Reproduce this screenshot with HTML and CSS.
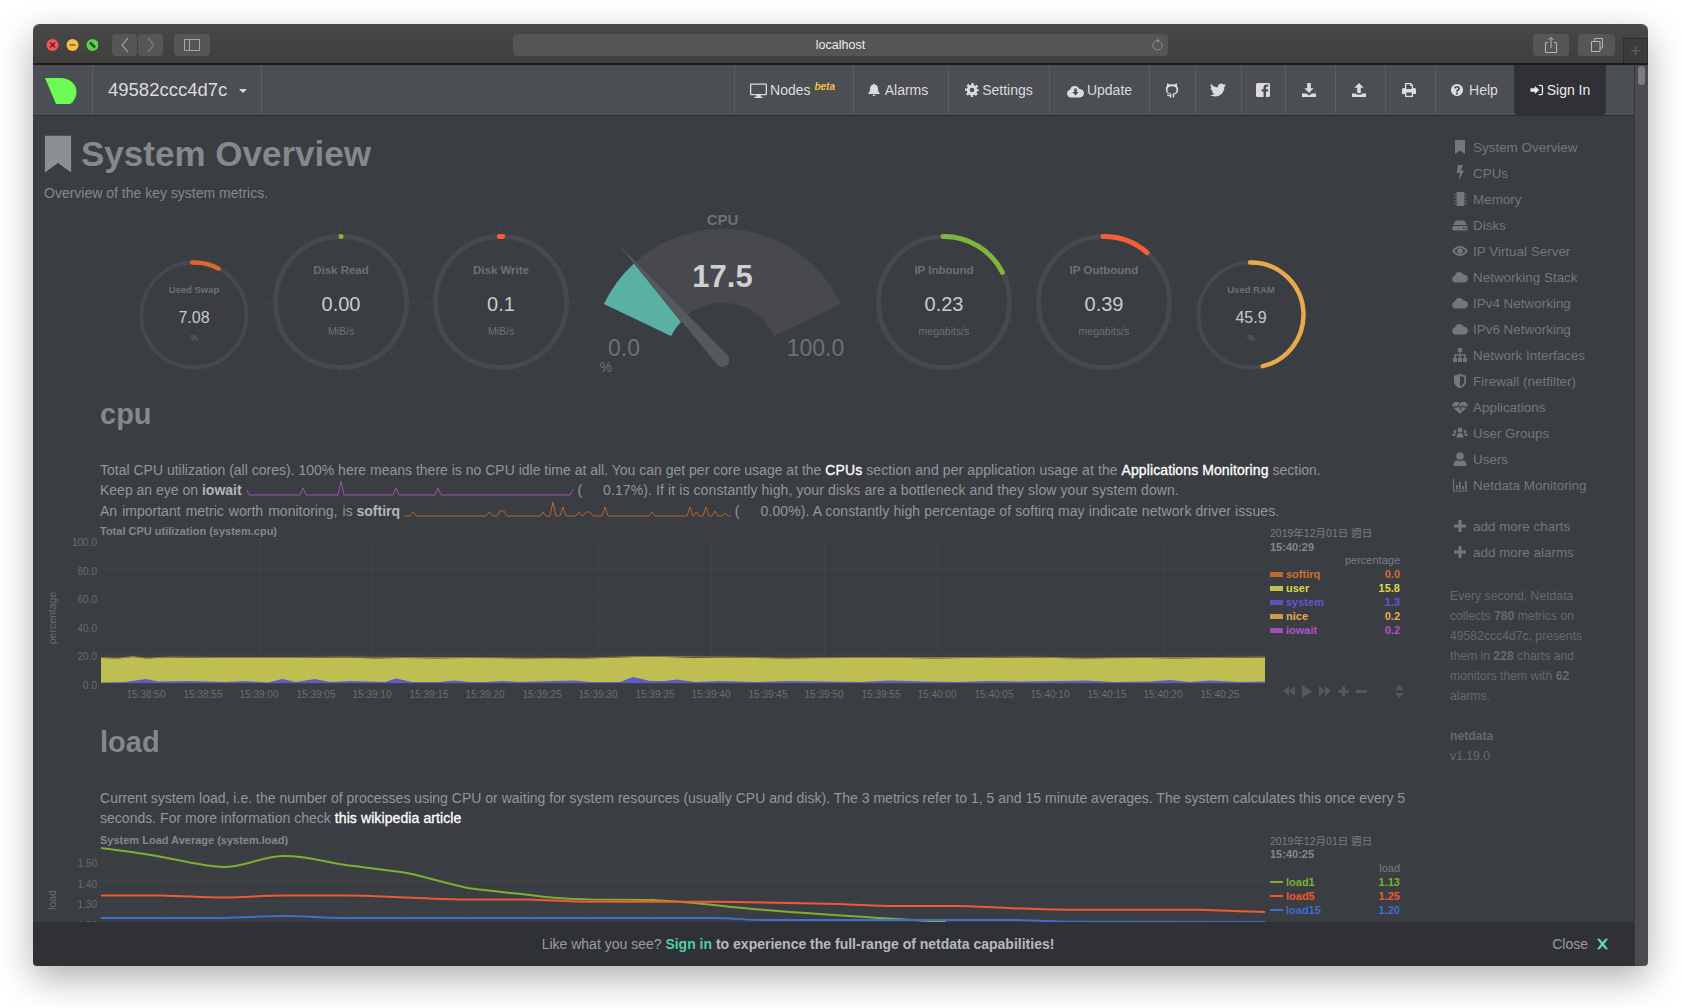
FILE: index.html
```html
<!DOCTYPE html>
<html lang="en">
<head>
  <meta charset="UTF-8">
  <meta name="viewport" content="width=device-width, initial-scale=1.0">
  <title>netdata dashboard</title>
  <link rel="stylesheet" href="styles.css">
</head>
<body>
  <svg class="sprite" aria-hidden="true">
    <symbol id="i-bookmark" viewBox="0 0 16 16"><path d="M3 1h10v14l-5-3.6L3 15z"/></symbol>
    <symbol id="i-bolt" viewBox="0 0 16 16"><path d="M6 0h5L9 5.5h3L6.5 16l1.6-8H4.6z"/></symbol>
    <symbol id="i-memory" viewBox="0 0 16 16"><path d="M5.5 1h6a1 1 0 0 1 1 1v12a1 1 0 0 1-1 1h-6a1 1 0 0 1-1-1V2a1 1 0 0 1 1-1zM2.5 3h1v1.5h-1zM2.5 6h1v1.5h-1zM2.5 9h1v1.5h-1zM2.5 12h1v1.5h-1zM13.5 3h1v1.5h-1zM13.5 6h1v1.5h-1zM13.5 9h1v1.5h-1zM13.5 12h1v1.5h-1z"/></symbol>
    <symbol id="i-hdd" viewBox="0 0 16 16"><path fill-rule="evenodd" d="M3.8 3.5h8.4L15 8H1zM1.5 9h13a1 1 0 0 1 1 1v2.5a1 1 0 0 1-1 1h-13a1 1 0 0 1-1-1V10a1 1 0 0 1 1-1zM11 10.5V12h1.3v-1.5zM13 10.5V12h1.3v-1.5z"/></symbol>
    <symbol id="i-eye" viewBox="0 0 16 16"><path fill-rule="evenodd" d="M8 3c3.6 0 6.4 2.4 7.8 5-1.4 2.6-4.2 5-7.8 5S1.6 10.6.2 8C1.6 5.4 4.4 3 8 3zM8 4.8c-2.3 0-4.3 1.4-5.7 3.2C3.7 9.8 5.7 11.2 8 11.2s4.3-1.4 5.7-3.2C12.3 6.2 10.3 4.8 8 4.8zM8 5.2a2.8 2.8 0 1 1 0 5.6 2.8 2.8 0 0 1 0-5.6z"/></symbol>
    <symbol id="i-cloud" viewBox="0 0 16 16"><path d="M3.7 13.5A3.5 3.5 0 0 1 2.9 6.6 4.6 4.6 0 0 1 11.6 5.7 3.9 3.9 0 0 1 12.2 13.5z"/></symbol>
    <symbol id="i-sitemap" viewBox="0 0 16 16"><path d="M5.8 1h4.4v4H8.6v2.2h5.2V11H15v4h-4v-4h1.3V8.7H8.7V11H10v4H6v-4h1.3V8.7H3.7V11H5v4H1v-4h1.2V7.2h5.2V5H5.8z"/></symbol>
    <symbol id="i-shield" viewBox="0 0 16 16"><path fill-rule="evenodd" d="M8 .8l6 2v5.4c0 3.6-3 6-6 7-3-1-6-3.4-6-7V2.8zM8 2.8v10.6c2.2-.9 4.2-2.8 4.2-5.2V4.1z"/></symbol>
    <symbol id="i-heartbeat" viewBox="0 0 16 16"><path d="M.4 7.2C-.2 3.5 4.8.9 8 4.4c3.2-3.5 8.2-.9 7.6 2.8H11.3l-1-1.8-1.7 3.7-1.8-4.2-1.4 2.3zM1.3 8.5h4.6l.8-1.3 1.9 4.3 1.8-4 .5 1h3.8L8 15z"/></symbol>
    <symbol id="i-users" viewBox="0 0 16 16"><circle cx="8" cy="5" r="2.4"/><circle cx="2.9" cy="6.4" r="1.5"/><circle cx="13.1" cy="6.4" r="1.5"/><path d="M4.5 12.5c0-3 1.5-4.4 3.5-4.4s3.5 1.4 3.5 4.4zM.2 11c0-1.8 1-2.7 2.7-2.7.5 0 .8.1 1.1.2-.6.7-.8 1.5-.9 2.5zM15.8 11c0-1.8-1-2.7-2.7-2.7-.5 0-.8.1-1.1.2.6.7.8 1.5.9 2.5z"/></symbol>
    <symbol id="i-user" viewBox="0 0 16 16"><circle cx="8" cy="5" r="3.8"/><path d="M1.5 15v-1.5C1.5 10.8 3.5 9.5 5.2 9.2c1.7.9 3.9.9 5.6 0 1.7.3 3.7 1.6 3.7 4.3V15z"/></symbol>
    <symbol id="i-chart" viewBox="0 0 16 16"><path d="M1 2h1v11.5h14v1H1zM4 8h1.7v4.5H4zM7 5h1.7v7.5H7zM10 9h1.7v3.5H10zM13 4h1.7v8.5H13z"/></symbol>
    <symbol id="i-plus" viewBox="0 0 16 16"><path d="M6.5 2h3v4.500H14v3H9.500V14h-3V9.500H2v-3h4.500z"/></symbol>
    <symbol id="i-times" viewBox="0 0 16 16"><path d="M4.5 1.500L8 5.500l3.500-4H15L10 8l5 6.500h-3.500L8 10.500l-3.500 4H1L6 8 1 1.500z"/></symbol>
    <symbol id="i-desktop" viewBox="0 0 16 16"><path fill-rule="evenodd" d="M1 1.5h14a1 1 0 0 1 1 1v9a1 1 0 0 1-1 1h-5v1.3h1.8V15H4.2v-1.2H6v-1.3H1a1 1 0 0 1-1-1v-9a1 1 0 0 1 1-1zM1.2 2.7v8.600h13.600V2.700z"/></symbol>
    <symbol id="i-bell" viewBox="0 0 16 16"><path d="M8 .8c.6 0 1 .4 1 1 2.2.4 3.5 2.2 3.5 4.5 0 3.8 1.5 5 2.5 6.2H1c1-1.2 2.5-2.4 2.5-6.2C3.5 4 4.8 2.2 7 1.800c0-.6.4-1 1-1zM6.300 13.500h3.400a1.700 1.700 0 0 1-3.400 0z"/></symbol>
    <symbol id="i-gear" viewBox="0 0 16 16"><circle cx="8" cy="8" r="4.3" fill="none" stroke="currentColor" stroke-width="3.4"/><circle cx="8" cy="8" r="6.8" fill="none" stroke="currentColor" stroke-width="2.4" pathLength="40" stroke-dasharray="2.6 2.4" stroke-dashoffset="1.3"/></symbol>
    <symbol id="i-cloud-down" viewBox="0 0 16 16"><path fill-rule="evenodd" d="M3.7 14.5A3.6 3.6 0 0 1 2.9 7.4 4.7 4.7 0 0 1 11.7 6.5 4 4 0 0 1 12.2 14.5zM6.8 6v3.5H5l3 3.3 3-3.3H9.2V6z"/></symbol>
    <symbol id="i-github" viewBox="0 0 16 16"><path fill-rule="evenodd" d="M3.1 1.5c.9 0 1.9.5 2.7 1.1A8 8 0 0 1 8 2.300c.8 0 1.500.1 2.200.3.800-.6 1.800-1.100 2.700-1.100.3.800.3 1.800.1 2.700.7.900 1.200 2 1.200 3.300 0 2.900-1.600 4.500-4 5.100v2.900H8.700v-3.800c1.900-.1 3.800-1 3.800-4.200 0-2.300-2-3.300-4.500-3.300S3.500 5.200 3.500 7.500c0 3.200 1.900 4.100 3.800 4.200v3.800H5.800v-1.300c-1.600.3-2.500-.3-3.100-1.600l1.100-.3c.4.700 1 .9 2 .7v-.8c-2.400-.6-4-2.200-4-5.100 0-1.300.5-2.400 1.200-3.300-.2-.9-.2-1.900.1-2.700z"/></symbol>
    <symbol id="i-twitter" viewBox="0 0 24 24"><path d="M23.950 4.570a10 10 0 0 1-2.820.77 4.960 4.960 0 0 0 2.160-2.720c-.95.55-2 .96-3.120 1.190a4.920 4.920 0 0 0-8.380 4.480C7.690 8.100 4.070 6.130 1.640 3.160a4.820 4.820 0 0 0-.67 2.480c0 1.710.87 3.210 2.190 4.100a4.900 4.900 0 0 1-2.230-.62v.06a4.920 4.920 0 0 0 3.950 4.830 5 5 0 0 1-2.210.08 4.940 4.940 0 0 0 4.600 3.420A9.870 9.870 0 0 1 0 19.540a14 14 0 0 0 7.560 2.210c9.050 0 14-7.500 14-13.980 0-.21 0-.42-.02-.63a9.940 9.940 0 0 0 2.460-2.550z"/></symbol>
    <symbol id="i-facebook" viewBox="0 0 16 16"><path d="M2.5 1h11A1.5 1.5 0 0 1 15 2.5v11a1.5 1.5 0 0 1-1.5 1.5H11V9.5h1.9l.3-2.3H11V5.8c0-.7.2-1.1 1.1-1.1h1.2V2.6h-1.8C9.7 2.6 8.5 3.8 8.5 5.6v1.6h-2v2.3h2V15h-6A1.5 1.5 0 0 1 1 13.5v-11A1.5 1.5 0 0 1 2.5 1z"/></symbol>
    <symbol id="i-download" viewBox="0 0 16 16"><path d="M6.2 1h3.6v5.2h2.900L8 11 3.300 6.200h2.900zM1 11.500h4.300L8 13.500l2.700-2H15V15H1z"/></symbol>
    <symbol id="i-upload" viewBox="0 0 16 16"><path d="M8 1l4.7 4.8H9.800V11H6.200V5.800H3.300zM1 11.500h4v1h6v-1h4V15H1z"/></symbol>
    <symbol id="i-print" viewBox="0 0 16 16"><path fill-rule="evenodd" d="M4 1h6l2 2v3h1.5A1.5 1.5 0 0 1 15 7.5V12h-3v3H4v-3H1V7.5A1.5 1.5 0 0 1 2.500 6H4zM5.300 2.300V7h5.400V3.800H9V2.300zM5.300 10.500v3.200h5.400v-3.200z"/></symbol>
    <symbol id="i-help" viewBox="0 0 16 16"><path fill-rule="evenodd" d="M8 1a7 7 0 1 1 0 14A7 7 0 0 1 8 1zM6.900 11v2h2.200v-2zM8 3.300c-1.900 0-3.200 1-3.400 2.700l2 .3c.1-.7.6-1.100 1.300-1.100s1.200.4 1.200 1c0 .5-.3.8-1 1.300-.8.6-1.200 1.200-1.200 2.100v.4h2.200v-.3c0-.4.2-.6.8-1.100 1-.7 1.400-1.400 1.400-2.400 0-1.800-1.200-2.900-3.300-2.900z"/></symbol>
    <symbol id="i-signin" viewBox="0 0 16 16"><path d="M5.5 3.500L10.500 8l-5 4.500V10H.5V6h5zM10 2h2.500A2.500 2.500 0 0 1 15 4.500v7a2.500 2.500 0 0 1-2.500 2.500H10v-1.500h2.500a1 1 0 0 0 1-1v-7a1 1 0 0 0-1-1H10z"/></symbol>
  </svg>

  <div class="window">
    <div class="titlebar">
      <svg class="lights" width="52" height="14" viewBox="0 0 52 14">
        <circle cx="6.5" cy="7" r="6" fill="#f1565a"/>
        <path d="M4 4.500l5 5M9 4.500l-5 5" stroke="#7c1518" stroke-width="1.5"/>
        <circle cx="26.5" cy="7" r="6" fill="#f6bd4b"/>
        <path d="M23.500 7h6" stroke="#8c5c0a" stroke-width="1.5"/>
        <circle cx="46.5" cy="7" r="6" fill="#5fcf54"/>
        <path d="M44 4.500l5 5" stroke="#14600f" stroke-width="2.5"/>
      </svg>
      <div class="tool-group">
        <span class="tool tool-nav"><svg width="10" height="16" viewBox="0 0 10 16"><path d="M8 1L2 8l6 7" fill="none" stroke="#9c9c9c" stroke-width="1.2"/></svg></span>
        <span class="tool tool-nav"><svg width="10" height="16" viewBox="0 0 10 16"><path d="M2 1l6 7-6 7" fill="none" stroke="#7d7d7d" stroke-width="1.2"/></svg></span>
      </div>
      <span class="tool tool-side"><svg width="16" height="12" viewBox="0 0 16 12"><path d="M.5.500h15v11H.5zM5.500.500v11" fill="none" stroke="#a5a5a5"/></svg></span>
      <div class="urlbar">
        <span class="url-text">localhost</span>
        <svg class="reload" width="12" height="14" viewBox="0 0 12 14"><path d="M9.500 4A4.600 4.600 0 1 1 6 2.800" fill="none" stroke="#8f8f8f"/><path d="M6 .5l3 2.300-3 2z" fill="#8f8f8f"/></svg>
      </div>
      <span class="tool tool-share"><svg width="14" height="18" viewBox="0 0 14 18"><path d="M4 6.500H1.500v10h11v-10H10M7 12V1.500M4.500 4L7 1.500 9.500 4" fill="none" stroke="#b5b5b5"/></svg></span>
      <span class="tool tool-tabs"><svg width="14" height="16" viewBox="0 0 14 16"><path d="M4.500 4V1.500h8V11H10M1.500 4.500H10v10H1.500z" fill="none" stroke="#b5b5b5"/></svg></span>
      <span class="new-tab">+</span>
    </div>

    <div class="viewport">
      <div class="app">
        <nav class="navbar">
          <div class="brand">
            <svg width="32" height="26" viewBox="0 0 32 26"><path d="M0 0h15c10 0 16 6 16.500 12.500C32 18 28 26 24 26H11z" fill="#6bfb54"/></svg>
          </div>
          <div class="host">49582ccc4d7c <span class="caret"></span></div>
          <div class="nav-spacer"></div>
          <a class="nav-item nav-nodes"><svg class="nav-icon nav-icon-wide"><use href="#i-desktop"/></svg>Nodes <sup class="beta">beta</sup></a>
          <a class="nav-item nav-alarms"><svg class="nav-icon"><use href="#i-bell"/></svg>Alarms</a>
          <a class="nav-item nav-settings"><svg class="nav-icon"><use href="#i-gear"/></svg>Settings</a>
          <a class="nav-item nav-update"><svg class="nav-icon nav-icon-wide"><use href="#i-cloud-down"/></svg>Update</a>
          <a class="nav-item nav-social"><svg class="nav-icon nav-icon-only"><use href="#i-github"/></svg></a>
          <a class="nav-item nav-social"><svg class="nav-icon nav-icon-only"><use href="#i-twitter"/></svg></a>
          <a class="nav-item nav-fb"><svg class="nav-icon nav-icon-only"><use href="#i-facebook"/></svg></a>
          <a class="nav-item nav-tool"><svg class="nav-icon nav-icon-only"><use href="#i-download"/></svg></a>
          <a class="nav-item nav-tool"><svg class="nav-icon nav-icon-only"><use href="#i-upload"/></svg></a>
          <a class="nav-item nav-tool"><svg class="nav-icon nav-icon-only"><use href="#i-print"/></svg></a>
          <a class="nav-item nav-help"><svg class="nav-icon"><use href="#i-help"/></svg>Help</a>
          <a class="nav-item nav-signin"><svg class="nav-icon"><use href="#i-signin"/></svg>Sign In</a>
        </nav>

        <div class="page">
          <main class="content">
            <div class="page-title">
              <svg class="title-icon"><use href="#i-bookmark"/></svg>
              <h1>System Overview</h1>
            </div>
            <p class="subtitle">Overview of the key system metrics.</p>

            <div class="gauges">
              <svg class="gauge-small" width="134" height="170" viewBox="0 0 134 170">
                <circle class="tick-minor" cx="67" cy="103" r="57.5" pathLength="360"/>
                <circle class="tick-major" cx="67" cy="103" r="58" pathLength="360"/>
                <circle class="ring" cx="67" cy="103" r="52.5"/>
                <circle class="arc arc-swap" cx="67" cy="103" r="52.5" pathLength="360" stroke-dasharray="30 400" transform="rotate(-92 67 103)"/>
                <text class="g-label-s" x="67" y="80.5">Used Swap</text>
                <text class="g-value-s" x="67" y="111">7.08</text>
                <text class="g-unit-s" x="67" y="129">%</text>
              </svg>
              <svg width="160" height="170" viewBox="0 0 160 170">
                <circle class="tick-minor" cx="80" cy="90" r="71" pathLength="360"/>
                <circle class="tick-major" cx="80" cy="90" r="72.5" pathLength="360"/>
                <circle class="ring" cx="80" cy="90" r="65.5"/>
                <circle class="arc arc-in" cx="80" cy="90" r="65.5" pathLength="360" stroke-dasharray="0.1 400" transform="rotate(-90 80 90)"/>
                <text class="g-label" x="80" y="62">Disk Read</text>
                <text class="g-value" x="80" y="99">0.00</text>
                <text class="g-unit" x="80" y="123">MiB/s</text>
              </svg>
              <svg width="160" height="170" viewBox="0 0 160 170">
                <circle class="tick-minor" cx="80" cy="90" r="71" pathLength="360"/>
                <circle class="tick-major" cx="80" cy="90" r="72.5" pathLength="360"/>
                <circle class="ring" cx="80" cy="90" r="65.5"/>
                <circle class="arc arc-out" cx="80" cy="90" r="65.5" pathLength="360" stroke-dasharray="3 400" transform="rotate(-91.5 80 90)"/>
                <text class="g-label" x="80" y="62">Disk Write</text>
                <text class="g-value" x="80" y="99">0.1</text>
                <text class="g-unit" x="80" y="123">MiB/s</text>
              </svg>
              <svg width="283" height="170" viewBox="0 0 283 170">
                <g transform="translate(141.5 148)">
                  <path class="cpu-bg" d="M-118.500-56A131 131 0 0 1 118.500-56L51.500-24A56.500 56.500 0 0 0-51.500-24z"/>
                  <path class="cpu-fill" d="M-118.500-56A131 131 0 0 1-88.500-96.500L-41.500-38A56.500 56.500 0 0 0-51.500-24z"/>
                  <path class="cpu-needle" d="M-105.500-117L5.200-4.700A7 7 0 1 1-5.200 4.700z"/>
                </g>
                <text class="cpu-title" x="141.5" y="13">CPU</text>
                <text class="cpu-value" x="141.5" y="75">17.5</text>
                <text class="cpu-scale" x="43" y="144">0.0</text>
                <text class="cpu-scale" x="234.5" y="144">100.0</text>
                <text class="cpu-unit" x="25" y="160">%</text>
              </svg>
              <svg width="160" height="170" viewBox="0 0 160 170">
                <circle class="tick-minor" cx="80" cy="90" r="71" pathLength="360"/>
                <circle class="tick-major" cx="80" cy="90" r="72.5" pathLength="360"/>
                <circle class="ring" cx="80" cy="90" r="65.5"/>
                <circle class="arc arc-in" cx="80" cy="90" r="65.5" pathLength="360" stroke-dasharray="64 400" transform="rotate(-91 80 90)"/>
                <text class="g-label" x="80" y="62">IP Inbound</text>
                <text class="g-value" x="80" y="99">0.23</text>
                <text class="g-unit" x="80" y="123">megabits/s</text>
              </svg>
              <svg width="160" height="170" viewBox="0 0 160 170">
                <circle class="tick-minor" cx="80" cy="90" r="71" pathLength="360"/>
                <circle class="tick-major" cx="80" cy="90" r="72.5" pathLength="360"/>
                <circle class="ring" cx="80" cy="90" r="65.5"/>
                <circle class="arc arc-out" cx="80" cy="90" r="65.5" pathLength="360" stroke-dasharray="42 400" transform="rotate(-91 80 90)"/>
                <text class="g-label" x="80" y="62">IP Outbound</text>
                <text class="g-value" x="80" y="99">0.39</text>
                <text class="g-unit" x="80" y="123">megabits/s</text>
              </svg>
              <svg class="gauge-small" width="134" height="170" viewBox="0 0 134 170">
                <circle class="tick-minor" cx="67" cy="103" r="57.5" pathLength="360"/>
                <circle class="tick-major" cx="67" cy="103" r="58" pathLength="360"/>
                <circle class="ring" cx="67" cy="103" r="52.5"/>
                <circle class="arc arc-ram" cx="67" cy="103" r="52.5" pathLength="360" stroke-dasharray="168 400" transform="rotate(-91 67 103)"/>
                <text class="g-label-s" x="67" y="80.5">Used RAM</text>
                <text class="g-value-s" x="67" y="111">45.9</text>
                <text class="g-unit-s" x="67" y="129">%</text>
              </svg>
            </div>

            <h2 class="section-title">cpu</h2>
            <p class="section-text">Total CPU utilization (all cores). 100% here means there is no CPU idle time at all. You can get per core usage at the <a>CPUs</a> <span class="wide">section and per application usage at the</span> <a>Applications Monitoring</a> section.<br>
              Keep an eye on <strong>iowait</strong> <svg class="spark" width="328" height="20" viewBox="0 0 328 20"><polyline class="spark-iowait" points="1,10 3,15 52,15 54,15 57,8 60,15 92,15 95,1 98,15 147,15 150,8 153,15 189,15 192,8 195,15 324,15 327,9"/></svg> (<span class="spark-gap"></span><span class="wide">0.17%). If it is constantly high, your disks are a bottleneck and they slow your system down.</span><br>
              <span class="lead-wide">An important metric worth monitoring, is</span> <strong>softirq</strong> <svg class="spark" width="327" height="20" viewBox="0 0 327 20"><polyline class="spark-softirq" points="0,15 6,15 9,11 12,15 82,15 85,11 89,15 93,15 96,10 100,10 103,15 136,15 139,11 142,15 146,15 149,1 152,15 156,15 159,6 162,15 172,15 175,11 178,15 179,15 182,11 186,11 189,15 198,15 201,6 204,15 245,15 248,11 251,15 283,15 286,6 289,15 290,15 292,11 295,15 299,15 302,6 305,15 308,15 311,10 314,15 318,15 321,12 324,15 327,15"/></svg> (<span class="spark-gap"></span><span class="wide">0.00%). A constantly high percentage of softirq may indicate network driver issues.</span></p>

            <div class="chart">
              <div class="chart-main">
                <div class="chart-title">Total CPU utilization (system.cpu)</div>
                <svg class="chart-plot" width="1226" height="170" viewBox="40 536 1226 170">
                  <path class="grid" d="M101 539.500H1265M101 568.500H1265M101 597H1265M101 626H1265M101 654.500H1265M101 683.500H1265M146.500 539V683M203 539V683M259.500 539V683M316 539V683M372.500 539V683M429 539V683M485.500 539V683M542 539V683M598.500 539V683M655 539V683M711.500 539V683M768 539V683M824.500 539V683M881 539V683M937.500 539V683M994 539V683M1050.500 539V683M1107 539V683M1163.500 539V683M1220 539V683"/>
                  <polygon class="area-user" points="101,658 118,658.5 133,657 146,658.5 170,657.5 195,658 225,658 255,657.5 285,658 315,658 345,657.5 375,658.5 405,658 435,658.5 465,658 495,658 525,658.5 555,658 585,658.5 605,658 635,657 665,657 695,658 725,657.5 755,658 785,658.5 815,658 845,658 875,657.5 905,658 935,658.5 965,658 995,658 1025,657.5 1055,658 1085,658.5 1115,658 1145,658 1175,658.5 1205,658 1235,658 1265,657.5 1265,683 101,683"/>
                  <polyline class="line-softirq" points="101,657.5 118,658 133,656.5 146,658 170,657 225,657.5 285,657.5 345,657 405,657.5 465,657.5 525,658 585,658 635,656.5 665,656.5 725,657 785,658 845,657.5 905,657.5 965,657.5 1025,657 1085,658 1145,657.5 1205,657.5 1265,657"/>
                  <polygon class="area-system" points="101,682.5 125,682 146,679 158,681.5 190,681 225,682 245,681 268,682.5 282,679 296,682 315,679 330,682 350,681 385,682 396,678.5 412,682 440,682 454,680.5 470,682 485,682 503,681 520,682 552,681 575,680.5 590,682 620,682 633,677 650,681 665,681 677,679.5 695,682 720,681 755,682 790,681 825,681.5 860,682 890,680.5 925,681.5 960,682 990,681 1020,681.5 1060,681 1085,680.5 1115,682 1150,681.5 1170,680 1190,682 1210,680.5 1240,682 1265,681.5 1265,683 101,683"/>
                  <text class="axis-y" x="97" y="546">100.0</text>
                  <text class="axis-y" x="97" y="574.5">80.0</text>
                  <text class="axis-y" x="97" y="603">60.0</text>
                  <text class="axis-y" x="97" y="632">40.0</text>
                  <text class="axis-y" x="97" y="660">20.0</text>
                  <text class="axis-y" x="97" y="689">0.0</text>
                  <text class="axis-name" transform="translate(56 618) rotate(-90)">percentage</text>
                  <text class="axis-x" x="146" y="698">15:38:50</text>
                  <text class="axis-x" x="203" y="698">15:38:55</text>
                  <text class="axis-x" x="259" y="698">15:39:00</text>
                  <text class="axis-x" x="316" y="698">15:39:05</text>
                  <text class="axis-x" x="372" y="698">15:39:10</text>
                  <text class="axis-x" x="429" y="698">15:39:15</text>
                  <text class="axis-x" x="485" y="698">15:39:20</text>
                  <text class="axis-x" x="542" y="698">15:39:25</text>
                  <text class="axis-x" x="598" y="698">15:39:30</text>
                  <text class="axis-x" x="655" y="698">15:39:35</text>
                  <text class="axis-x" x="711" y="698">15:39:40</text>
                  <text class="axis-x" x="768" y="698">15:39:45</text>
                  <text class="axis-x" x="824" y="698">15:39:50</text>
                  <text class="axis-x" x="881" y="698">15:39:55</text>
                  <text class="axis-x" x="937" y="698">15:40:00</text>
                  <text class="axis-x" x="994" y="698">15:40:05</text>
                  <text class="axis-x" x="1050" y="698">15:40:10</text>
                  <text class="axis-x" x="1107" y="698">15:40:15</text>
                  <text class="axis-x" x="1163" y="698">15:40:20</text>
                  <text class="axis-x" x="1220" y="698">15:40:25</text>
                </svg>
              </div>
              <div class="legend">
                <div class="legend-date">2019年12月01日 週日</div>
                <div class="legend-time">15:40:29</div>
                <div class="legend-units">percentage</div>
                <div class="legend-row c-softirq"><span class="swatch"></span><span class="legend-name">softirq</span><span>0.0</span></div>
                <div class="legend-row c-user"><span class="swatch"></span><span class="legend-name">user</span><span>15.8</span></div>
                <div class="legend-row c-system"><span class="swatch"></span><span class="legend-name">system</span><span>1.3</span></div>
                <div class="legend-row c-nice"><span class="swatch"></span><span class="legend-name">nice</span><span>0.2</span></div>
                <div class="legend-row c-iowait"><span class="swatch"></span><span class="legend-name">iowait</span><span>0.2</span></div>
                <svg class="chart-tools" width="136" height="20" viewBox="0 0 136 20">
                  <path d="M19 4v10l-6-5zM25 4v10l-6-5z"/>
                  <path d="M32 3v13l10-6.500z"/>
                  <path d="M49 4v10l6-5zM55 4v10l6-5z"/>
                  <path d="M72 4.500h3V8h3.500v3H75v3.500h-3V11h-3.500V8H72z"/>
                  <path d="M86 8h11v3H86z"/>
                  <path d="M125 8l4.500-5 4.500 5zM125 11l4.500 5 4.500-5z"/>
                </svg>
              </div>
            </div>

            <h2 class="section-title section-load">load</h2>
            <p class="section-text section-text-load">Current system load, i.e. the number of processes using CPU or waiting for system resources (usually CPU and disk). The 3 metrics refer to 1, 5 and 15 minute averages. The system calculates this once every 5 seconds. For more information check <a>this wikipedia article</a></p>

            <div class="chart chart-load">
              <div class="chart-main">
                <div class="chart-title">System Load Average (system.load)</div>
                <svg class="chart-plot" width="1226" height="100" viewBox="40 845 1226 100">
                  <path class="grid" d="M101 859.500H1265M101 880.500H1265M101 901.500H1265M162 847V922M223 847V922M284 847V922M345 847V922M406 847V922M468 847V922M530 847V922M591 847V922M652 847V922M714 847V922M775 847V922M837 847V922M898 847V922M960 847V922M1021 847V922M1082 847V922M1144 847V922M1205 847V922"/>
                  <path class="line-load1" d="M101 848C122 851 142 853 162 857C185 861 205 867 224 867C245 867 262 856 285 856C306 856 326 862 346 865C368 868 390 870 407 873C430 878 448 884 468 888C490 891 510 893 530 895C550 898 570 899 591 899.5C612 899.5 632 899.5 652 900C675 901 695 903 714 905C760 911 850 916 946 922"/>
                  <path class="line-load5" d="M101 895.5H162C185 896 205 897.5 224 897.5C245 897.5 262 895.5 285 895.5H346C370 895.5 390 897 407 897.5C430 898.5 448 899.5 468 899.5H530C550 900 570 901.7 591 901.7H714C735 902 750 902.7 839 904C865 905 880 906 893 906H958C1000 907 1030 909.7 1065 909.7H1202C1225 910.5 1245 911.5 1265 912"/>
                  <path class="line-load15" d="M101 918H224C245 917.5 265 916 285 916C305 916 325 918 346 918H714C735 918 745 920 760 920H1017C1035 920.5 1050 921.5 1065 921.7L1265 922"/>
                  <text class="axis-y" x="97" y="867">1.50</text>
                  <text class="axis-y" x="97" y="887.5">1.40</text>
                  <text class="axis-y" x="97" y="908">1.30</text>
                  <text class="axis-y" x="97" y="929">1.20</text>
                  <text class="axis-name" transform="translate(56 900) rotate(-90)">load</text>
                </svg>
              </div>
              <div class="legend legend-load">
                <div class="legend-date">2019年12月01日 週日</div>
                <div class="legend-time">15:40:25</div>
                <div class="legend-units">load</div>
                <div class="legend-row c-load1"><span class="swatch swatch-line"></span><span class="legend-name">load1</span><span>1.13</span></div>
                <div class="legend-row c-load5"><span class="swatch swatch-line"></span><span class="legend-name">load5</span><span>1.25</span></div>
                <div class="legend-row c-load15"><span class="swatch swatch-line"></span><span class="legend-name">load15</span><span>1.20</span></div>
              </div>
            </div>
          </main>

          <aside class="sidebar">
            <ul class="side-nav">
              <li><svg class="side-icon"><use href="#i-bookmark"/></svg>System Overview</li>
              <li><svg class="side-icon"><use href="#i-bolt"/></svg>CPUs</li>
              <li><svg class="side-icon"><use href="#i-memory"/></svg>Memory</li>
              <li><svg class="side-icon"><use href="#i-hdd"/></svg>Disks</li>
              <li><svg class="side-icon"><use href="#i-eye"/></svg>IP Virtual Server</li>
              <li><svg class="side-icon"><use href="#i-cloud"/></svg>Networking Stack</li>
              <li><svg class="side-icon"><use href="#i-cloud"/></svg>IPv4 Networking</li>
              <li><svg class="side-icon"><use href="#i-cloud"/></svg>IPv6 Networking</li>
              <li><svg class="side-icon"><use href="#i-sitemap"/></svg>Network Interfaces</li>
              <li><svg class="side-icon"><use href="#i-shield"/></svg>Firewall (netfilter)</li>
              <li><svg class="side-icon"><use href="#i-heartbeat"/></svg>Applications</li>
              <li><svg class="side-icon"><use href="#i-users"/></svg>User Groups</li>
              <li><svg class="side-icon"><use href="#i-user"/></svg>Users</li>
              <li><svg class="side-icon"><use href="#i-chart"/></svg>Netdata Monitoring</li>
            </ul>
            <ul class="side-nav side-add">
              <li><svg class="side-icon"><use href="#i-plus"/></svg>add more charts</li>
              <li><svg class="side-icon"><use href="#i-plus"/></svg>add more alarms</li>
            </ul>
            <p class="side-text">Every second, Netdata collects <strong>780</strong> metrics on 49582ccc4d7c, presents them in <strong>228</strong> charts and monitors them with <strong>62</strong> alarms.</p>
            <p class="side-text"><strong>netdata</strong><br>v1.19.0</p>
          </aside>
        </div>

        <div class="banner">
          <div class="banner-text">Like what you see? <a>Sign in</a> <strong>to experience the full-range of netdata capabilities!</strong></div>
          <div class="banner-close">Close <svg class="close-icon"><use href="#i-times"/></svg></div>
        </div>
      </div>
      <div class="scrollbar"><div class="scroll-thumb"></div></div>
    </div>
  </div>
</body>
</html>
```

FILE: styles.css
```css
html, body {
  margin: 0;
  padding: 0;
  background-color: #fff;
  overflow: hidden;
}
body {
  font-family: "Liberation Sans", Arial, sans-serif;
  color: #9a9da0;
  height: 1008px;
}
.sprite {
  display: none;
}
svg {
  fill: currentColor;
}
ul {
  list-style: none;
  margin: 0;
  padding: 0;
}

/* browser window */
.window {
  width: 1615px;
  height: 941px;
  margin: 25px 0 0 33px;
  display: flex;
  flex-direction: column;
  border-radius: 6px 6px 4px 4px;
  overflow: hidden;
  box-shadow: 0 -1px 0 rgba(30, 30, 30, 0.8), 0 12px 36px rgba(0, 0, 0, 0.32);
}
.titlebar {
  height: 40px;
  box-sizing: border-box;
  flex: none;
  display: flex;
  align-items: center;
  background: linear-gradient(#484746, #403f3e);
  border-bottom: 2px solid #1b1b1b;
  padding: 2px 0 0 13px;
}
.lights {
  flex: none;
}
.tool-group {
  display: flex;
  gap: 1px;
  margin-left: 14px;
}
.tool {
  height: 22px;
  background-color: #565656;
  border-radius: 4px;
  display: flex;
  align-items: center;
  justify-content: center;
  flex: none;
}
.tool-nav {
  width: 25px;
}
.tool-side {
  width: 36px;
  margin-left: 11px;
}
.urlbar {
  width: 655px;
  height: 22px;
  margin-left: 303px;
  background-color: #555;
  border-radius: 4px;
  display: flex;
  align-items: center;
  justify-content: center;
  position: relative;
  flex: none;
}
.url-text {
  font-size: 12.5px;
  color: #ececec;
}
.reload {
  position: absolute;
  right: 5px;
  top: 4px;
}
.tool-share {
  width: 36px;
  margin-left: 365px;
}
.tool-tabs {
  width: 37px;
  margin-left: 9px;
}
.new-tab {
  width: 25px;
  height: 25px;
  margin-left: 8px;
  align-self: flex-end;
  border: 1px solid #2e2e2e;
  border-bottom: none;
  box-sizing: border-box;
  background-color: #3c3b3a;
  color: #5f5f5f;
  font-size: 18px;
  line-height: 24px;
  text-align: center;
  flex: none;
}

.viewport {
  flex: 1;
  display: flex;
  min-height: 0;
}
.app {
  flex: 1;
  display: flex;
  flex-direction: column;
  min-width: 0;
}
.scrollbar {
  width: 14px;
  flex: none;
  background-color: #4a4c50;
  border-left: 1px solid #36383c;
  box-sizing: border-box;
  padding: 1px 3px;
}
.scroll-thumb {
  width: 7px;
  height: 19px;
  border-radius: 4px;
  background-color: #7b7d80;
}

/* navbar */
.navbar {
  height: 51px;
  flex: none;
  display: flex;
  align-items: stretch;
  background-color: #4b4e53;
  border-bottom: 1px solid #2c2e32;
  box-sizing: border-box;
  padding-right: 28px;
  font-size: 14px;
  color: #dcdcdc;
}
.brand {
  width: 59px;
  padding: 13px 0 0 12px;
  box-sizing: border-box;
  flex: none;
}
.host {
  width: 170px;
  box-sizing: border-box;
  border-left: 1px solid #5a5d62;
  border-right: 1px solid #5a5d62;
  padding-left: 15px;
  font-size: 18.5px;
  line-height: 50px;
  flex: none;
}
.caret {
  display: inline-block;
  width: 0;
  height: 0;
  margin-left: 7px;
  border-top: 4px solid #dcdcdc;
  border-left: 4px solid transparent;
  border-right: 4px solid transparent;
  vertical-align: middle;
}
.nav-spacer {
  flex: 1;
}
.nav-item {
  display: flex;
  align-items: center;
  justify-content: center;
  gap: 3px;
  border-left: 1px solid #5a5d62;
  margin-top: 1px;
  margin-bottom: 1px;
  box-sizing: border-box;
  flex: none;
  white-space: pre;
}
.nav-icon {
  width: 14px;
  height: 14px;
}
.nav-icon-wide {
  width: 17px;
  height: 17px;
}
.nav-icon-only {
  width: 16px;
  height: 16px;
}
.beta {
  color: #f5c242;
  font-size: 10px;
  font-style: italic;
  font-weight: bold;
  margin: 0 0 6px -3px;
  line-height: 1;
}
.nav-nodes { width: 119px; padding-right: 3px; }
.nav-alarms { width: 95px; gap: 4px; padding-right: 7px; }
.nav-settings { width: 101px; }
.nav-update { width: 100px; }
.nav-social { width: 46px; padding-right: 2px; }
.nav-fb { width: 44px; padding-right: 2px; }
.nav-tool { width: 50px; padding-right: 4px; }
.nav-help { width: 79px; gap: 5px; padding-right: 2px; }
.nav-signin {
  width: 92px;
  border-left: none;
  margin: 0;
  background-color: #2f3136;
  border-radius: 0 0 4px 4px;
  color: #ececec;
}

/* main page */
.page {
  flex: 1;
  min-height: 0;
  display: flex;
  overflow: hidden;
  background-color: #3a3d42;
}
.content {
  width: 1417px;
  flex: none;
  box-sizing: border-box;
  padding: 20px 0 0 11px;
}
.page-title {
  display: flex;
  height: 36px;
  align-items: center;
}
.title-icon {
  width: 42px;
  height: 42px;
  margin-left: -7px;
  color: #8c8f93;
  flex: none;
}
.page-title h1 {
  margin: 0 0 0 2px;
  font-size: 35px;
  line-height: 36px;
  color: #85888c;
}
.subtitle {
  margin: 11px 0 0;
  font-size: 14px;
  line-height: 20px;
  color: #85888c;
}

/* gauges */
.gauges {
  display: flex;
  margin: 9px 0 0 83px;
}
.gauges svg {
  flex: none;
}
.gauges text {
  text-anchor: middle;
}
.ring {
  fill: none;
  stroke: #46494e;
  stroke-width: 5;
}
.gauge-small .ring {
  stroke-width: 4;
}
.tick-minor {
  fill: none;
  stroke: #46494e;
  stroke-width: 2.5;
  stroke-dasharray: 0.7 14.3;
  stroke-dashoffset: 0.35;
}
.tick-major {
  fill: none;
  stroke: #46494e;
  stroke-width: 5;
  stroke-dasharray: 0.7 89.3;
  stroke-dashoffset: 0.35;
}
.arc {
  fill: none;
  stroke-width: 5;
  stroke-linecap: round;
}
.gauge-small .arc {
  stroke-width: 4.5;
}
.arc-swap { stroke: #dc662c; }
.arc-in { stroke: #7fb53c; }
.arc-out { stroke: #f55e38; }
.arc-ram { stroke: #e9a94a; }
.g-label, .g-label-s, .cpu-title {
  font-weight: bold;
  fill: #6e7175;
}
.g-label { font-size: 11.5px; }
.g-label-s { font-size: 9.5px; }
.g-value, .g-value-s {
  fill: #c9cacb;
}
.g-value { font-size: 20px; }
.g-value-s { font-size: 16px; }
.g-unit, .g-unit-s {
  fill: #6e7175;
}
.g-unit { font-size: 10.5px; }
.g-unit-s { font-size: 8.5px; }
.cpu-bg { fill: #47494e; }
.cpu-fill { fill: #5bb0a4; }
.cpu-needle { fill: #55585d; }
.cpu-title { font-size: 15px; }
.cpu-value {
  font-size: 31px;
  font-weight: bold;
  fill: #cfd0d1;
}
.cpu-scale {
  font-size: 23px;
  fill: #6e7175;
}
.cpu-unit {
  font-size: 14px;
  fill: #6e7175;
}

/* sections */
.section-title {
  margin: 15px 0 0 56px;
  font-size: 29px;
  line-height: 34px;
  color: #85888c;
}
.section-load {
  margin-top: 19px;
}
.section-text {
  margin: 29px 0 0 56px;
  width: 1318px;
  font-size: 14px;
  line-height: 20.3px;
  color: #94979a;
}
.section-text-load {
  letter-spacing: 0.015px;
}
.section-text a {
  color: #fff;
  letter-spacing: 0.1px;
  -webkit-text-stroke: 0.3px #fff;
}
.section-text strong {
  color: #b4b6b8;
}
.wide {
  letter-spacing: 0.1px;
}
.lead-wide {
  word-spacing: 1.2px;
}
.spark {
  display: inline-block;
  vertical-align: top;
  fill: none;
}
.spark-iowait {
  stroke: #a44eb3;
  fill: none;
}
.spark-softirq {
  stroke: #b4632c;
  fill: none;
}
.spark-gap {
  display: inline-block;
  width: 21px;
}

/* charts */
.chart {
  display: flex;
  margin: 5px 0 0 -4px;
}
.chart-load {
  margin-top: 7px;
}
.chart-main {
  width: 1226px;
  flex: none;
}
.chart-title {
  height: 10px;
  line-height: 10px;
  margin-left: 60px;
  font-size: 11px;
  font-weight: bold;
  color: #85888c;
}
.chart-plot {
  display: block;
}
.grid {
  fill: none;
  stroke: #404348;
  stroke-width: 1;
}
.area-user { fill: #bfbe52; }
.area-system { fill: #5c5ccb; }
.line-softirq {
  fill: none;
  stroke: #8f7a3c;
  stroke-width: 1;
}
.line-load1, .line-load5, .line-load15 {
  fill: none;
  stroke-width: 2;
}
.line-load1 { stroke: #7cb032; }
.line-load5 { stroke: #ef5a32; }
.line-load15 { stroke: #3f6dd0; }
.axis-y {
  font-size: 10px;
  text-anchor: end;
  fill: #696c70;
}
.axis-x {
  font-size: 10px;
  text-anchor: middle;
  fill: #6c6f73;
}
.axis-name {
  font-size: 10.5px;
  text-anchor: middle;
  fill: #696c70;
}
.legend {
  width: 130px;
  margin-left: 4px;
  margin-top: 0.5px;
  flex: none;
  font-size: 11px;
  line-height: 14px;
}
.legend-load {
  margin-top: -1.5px;
}
.legend-date {
  height: 13.5px;
  font-family: "Liberation Sans", "Noto Sans CJK TC", sans-serif;
  font-size: 10.5px;
  color: #7b7e82;
}
.legend-time {
  height: 13.5px;
  font-weight: bold;
  color: #85888c;
}
.legend-units {
  text-align: right;
  color: #7b7e82;
}
.legend-row {
  display: flex;
  align-items: center;
  font-weight: bold;
  height: 14px;
}
.legend-name {
  flex: 1;
}
.swatch {
  width: 13px;
  height: 5px;
  margin-right: 3px;
  background-color: currentColor;
  opacity: 0.85;
}
.swatch-line {
  height: 2px;
  opacity: 1;
}
.c-softirq { color: #d0702f; }
.c-user { color: #d9d94a; }
.c-system { color: #5a5ad6; }
.c-nice { color: #e9a94a; }
.c-iowait { color: #ad55c2; }
.c-load1 { color: #7cb032; }
.c-load5 { color: #f0582f; }
.c-load15 { color: #3f6dd0; }
.chart-tools {
  display: block;
  margin-top: 45px;
  color: #55585c;
}

/* right menu */
.sidebar {
  width: 184px;
  flex: none;
  box-sizing: border-box;
  padding: 18px 0 0 2px;
  font-size: 13.45px;
  color: #74777c;
}
.side-nav li {
  height: 26px;
  display: flex;
  align-items: center;
  gap: 5px;
}
.side-icon {
  width: 16px;
  height: 16px;
  flex: none;
}
.side-add {
  margin-top: 15px;
  margin-bottom: 21px;
}
.side-text {
  margin: 20px 0 0 -2px;
  width: 150px;
  font-size: 12.2px;
  line-height: 20px;
  color: #666a6e;
}

/* bottom banner */
.banner {
  height: 44px;
  flex: none;
  display: flex;
  align-items: center;
  background-color: #2f3136;
  font-size: 14px;
  color: #9a9da0;
}
.banner-text {
  width: 1530px;
  margin-right: -1530px;
  text-align: center;
}
.banner-text a {
  color: #4fd1a0;
  font-weight: bold;
}
.banner-text strong {
  color: #b9babc;
}
.banner-close {
  margin-left: auto;
  margin-right: 25px;
  display: flex;
  align-items: center;
  gap: 8px;
}
.close-icon {
  width: 13px;
  height: 14px;
  color: #5fd6a8;
}
```
